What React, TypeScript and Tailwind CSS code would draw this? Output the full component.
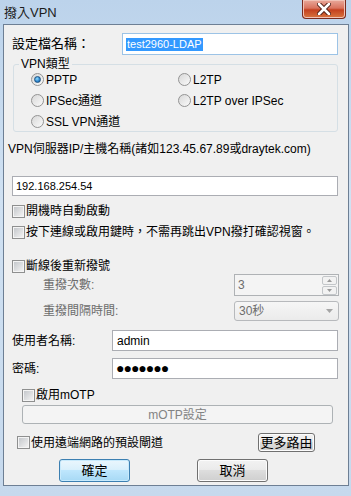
import type { ReactNode } from 'react'

function Check() {
  return (
    <span className="flex h-[13px] w-[13px] shrink-0 items-center justify-center border border-[#8e8f8f] bg-[#f4f4f4]">
      <span className="h-[9px] w-[9px] bg-gradient-to-br from-[#c5c8cc] to-[#f2f2f2]" />
    </span>
  )
}

function Radio({ on = false }: { on?: boolean }) {
  return (
    <span className="flex h-[13px] w-[13px] shrink-0 items-center justify-center rounded-full border border-[#939393] bg-gradient-to-br from-[#d8d8d8] to-[#fafafa]">
      {on && (
        <span className="h-[7px] w-[7px] rounded-full border border-[#1d5281] bg-[radial-gradient(circle_at_40%_35%,#8fdcff,#2b83cc_60%,#1a4f8a)]" />
      )}
    </span>
  )
}

function CheckRow({ children, className = '' }: { children: ReactNode; className?: string }) {
  return (
    <div className={`flex items-center gap-[1px] ${className}`}>
      <Check />
      <span>{children}</span>
    </div>
  )
}

function Button({ children, className = '', primary = false }: { children: ReactNode; className?: string; primary?: boolean }) {
  return (
    <div
      className={`flex items-center justify-center rounded-[3px] border text-[13px] ${
        primary
          ? 'border-[#3c7fb1] bg-[linear-gradient(#eaf6fd_0%,#d9f0fc_45%,#bee6fd_50%,#a7d9f5_100%)] shadow-[inset_0_0_0_1px_#c8eafc]'
          : 'border-[#707070] bg-[linear-gradient(#f2f2f2_0%,#ebebeb_45%,#dddddd_50%,#cfcfcf_100%)] shadow-[inset_0_0_0_1px_#fcfcfc]'
      } ${className}`}
    >
      {children}
    </div>
  )
}

export default function App() {
  return (
    <div className="h-[496px] w-[351px] overflow-hidden bg-[linear-gradient(#bcd3eb,#d0e1f2_40%,#c6d9ed)] font-['Liberation_Sans','Noto_Sans_CJK_TC',sans-serif] text-[12px] text-black">
      <div className="flex h-[24px] items-start justify-between">
        <span className="mt-[3px] pl-[4px] text-[13px] text-[#1c1c1c]">撥入VPN</span>
        <div className="mr-[5px] flex h-[19px] w-[44px] items-center justify-center rounded-b-[4px] border border-t-0 border-[#7a2b1f] bg-[linear-gradient(#e9a99b,#d9735e_45%,#c4401f_55%,#d8763f)] shadow-[inset_0_0_0_1px_#f1c3b7]">
          <svg width="14" height="12" viewBox="0 0 14 12">
            <path d="M2 1 L12 11 M12 1 L2 11" stroke="#4a1a12" strokeWidth="4.5" strokeLinecap="round" />
            <path d="M2 1 L12 11 M12 1 L2 11" stroke="#ffffff" strokeWidth="2.6" strokeLinecap="round" />
          </svg>
        </div>
      </div>

      <div className="ml-[3px] flex h-[462px] w-[346px] flex-col border border-[#6d7f94] bg-[#f0f0f0]">
        <div className="mt-[8px] flex h-[22px] items-center pl-[8px]">
          <span className="w-[110px] text-[13px]">設定檔名稱：</span>
          <div className="flex h-[22px] w-[216px] items-center border border-[#9cc3e6] bg-white pl-[3px]">
            <span className="bg-[#3399ff] px-px text-[11px] leading-[13px] text-white">test2960-LDAP</span>
          </div>
        </div>

        <div className="relative ml-[9px] mt-[9px] h-[68px] w-[325px] rounded-[3px] border border-[#d5dfe5] pt-[4px]">
          <span className="absolute left-[5px] top-[-9px] bg-[#f0f0f0] px-[2px] leading-[16px]">VPN類型</span>
          <div className="grid grid-cols-[147px_1fr] pl-[17px]">
            <div className="flex h-[21px] items-center gap-[2px]"><Radio on /><span>PPTP</span></div>
            <div className="flex h-[21px] items-center gap-[2px]"><Radio /><span>L2TP</span></div>
            <div className="flex h-[21px] items-center gap-[2px]"><Radio /><span>IPSec通道</span></div>
            <div className="flex h-[21px] items-center gap-[2px]"><Radio /><span>L2TP over IPSec</span></div>
            <div className="flex h-[21px] items-center gap-[2px]"><Radio /><span>SSL VPN通道</span></div>
          </div>
        </div>

        <div className="mt-[9px] flex h-[16px] items-center pl-[4px]">VPN伺服器IP/主機名稱(諸如123.45.67.89或draytek.com)</div>

        <div className="ml-[8px] mt-[19px] flex h-[20px] w-[326px] items-center border border-[#abadb3] bg-white pl-[3px] text-[11px]">192.168.254.54</div>

        <CheckRow className="mt-[5px] h-[20px] pl-[8px]">開機時自動啟動</CheckRow>
        <CheckRow className="mt-[1px] h-[20px] pl-[8px]">按下連線或啟用鍵時，不需再跳出VPN撥打確認視窗。</CheckRow>
        <CheckRow className="mt-[16px] h-[16px] pl-[8px]">斷線後重新撥號</CheckRow>

        <div className="flex h-[22px] items-center pl-[39px] text-[#6d6d6d]">
          <span className="w-[191px]">重撥次數:</span>
          <div className="flex h-[22px] w-[105px] items-center justify-between border border-[#afb2b5] bg-[#f4f4f4] pl-[3px]">
            <span>3</span>
            <div className="mr-px flex flex-col gap-px">
              <div className="flex h-[9px] w-[15px] items-center justify-center rounded-[2px] border border-[#c3c6c9] bg-[#f2f2f2]">
                <svg width="5" height="3" viewBox="0 0 5 3"><path d="M0 3 L2.5 0 L5 3Z" fill="#9a9a9a" /></svg>
              </div>
              <div className="flex h-[9px] w-[15px] items-center justify-center rounded-[2px] border border-[#c3c6c9] bg-[#f2f2f2]">
                <svg width="5" height="3" viewBox="0 0 5 3"><path d="M0 0 L5 0 L2.5 3Z" fill="#9a9a9a" /></svg>
              </div>
            </div>
          </div>
        </div>

        <div className="mt-[5px] flex h-[20px] items-center pl-[39px] text-[#6d6d6d]">
          <span className="w-[191px]">重撥間隔時間:</span>
          <div className="flex h-[20px] w-[105px] items-center justify-between rounded-[3px] border border-[#b7b9bc] bg-[linear-gradient(#f6f6f6,#ebebeb)] pl-[4px] pr-[5px]">
            <span>30秒</span>
            <svg width="7" height="4" viewBox="0 0 7 4"><path d="M0 0 L7 0 L3.5 4Z" fill="#a5a5a5" /></svg>
          </div>
        </div>

        <div className="mt-[9px] flex h-[21px] items-center pl-[8px]">
          <span className="w-[100px]">使用者名稱:</span>
          <div className="flex h-[21px] w-[226px] items-center border border-[#abadb3] bg-white pl-[4px]">admin</div>
        </div>
        <div className="mt-[7px] flex h-[21px] items-center pl-[8px]">
          <span className="w-[100px]">密碼:</span>
          <div className="flex h-[21px] w-[226px] items-center border border-[#abadb3] bg-white pl-[3px] text-[14px] tracking-[-1px]">●●●●●●●</div>
        </div>

        <CheckRow className="mt-[8px] h-[16px] pl-[18px]">啟用mOTP</CheckRow>
        <div className="ml-[18px] mt-[2px] flex h-[19px] w-[311px] items-center justify-center rounded-[3px] border border-[#adb2b5] bg-[#f4f4f4] text-[#838383]">mOTP設定</div>

        <div className="mt-[9px] flex h-[19px] items-center pl-[13px]">
          <CheckRow className="w-[241px]">使用遠端網路的預設閘道</CheckRow>
          <Button className="h-[19px] w-[57px]">更多路由</Button>
        </div>

        <div className="mt-[7px] flex h-[23px] items-center pl-[55px]">
          <Button primary className="h-[23px] w-[71px]">確定</Button>
          <Button className="ml-[67px] h-[23px] w-[71px]">取消</Button>
        </div>
      </div>
    </div>
  )
}
